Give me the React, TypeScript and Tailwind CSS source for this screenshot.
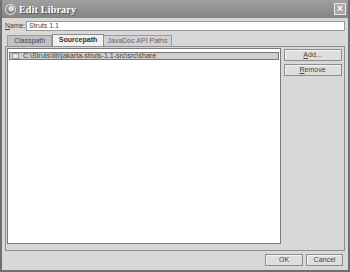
import React from "react";

const font = { fontFamily: '"Liberation Sans", Arial, sans-serif' };

const Button = ({ children, className = "" }: { children: React.ReactNode; className?: string }) => (
  <button
    className={`flex items-center justify-center border border-[#8c8c8c] bg-[#dedede] text-[7px] text-[#444] shadow-[inset_1px_1px_0_#f4f4f4] ${className}`}
  >
    {children}
  </button>
);

export default function App() {
  return (
    <div className="w-[350px] h-[272px] bg-[#6f6f6f] p-[2px] pt-0" style={font}>
      <div className="flex h-full flex-col bg-[#d8d8d8]">
        {/* title bar */}
        <div className="flex h-[18px] items-center bg-gradient-to-b from-[#a0a0a0] to-[#848484] pl-[3px] pr-[2px]">
          <div className="flex h-[11px] w-[11px] items-center justify-center rounded-full border border-[#eee] bg-[#8a8a8a] text-[7px] font-bold text-white">
            ⚙
          </div>
          <span className="ml-[3px] text-[10px] font-bold tracking-[0.2px] text-white [text-shadow:1px_1px_0_#555]" style={{ fontFamily: '"Liberation Serif", serif' }}>
            Edit Library
          </span>
          <div className="ml-auto flex h-[12px] w-[12px] items-center justify-center border border-[#e8e8e8] bg-[#a9a9a9] text-[10px] font-bold leading-none text-white">
            ×
          </div>
        </div>

        <div className="flex flex-1 flex-col px-[3px]">
          {/* name row */}
          <div className="mt-[3px] flex h-[10px] items-center">
            <span className="w-[21px] text-[7px] text-[#444]">
              <span className="underline">N</span>ame:
            </span>
            <div className="flex h-[10px] flex-1 items-center border border-[#9a9a9a] bg-white pl-[2px] text-[7px] text-[#444]">
              Struts 1.1
            </div>
          </div>

          {/* tabs */}
          <div className="mt-[3px] flex h-[12px] items-end pl-[2px]">
            <div className="flex h-[11px] w-[45px] items-center justify-center border border-b-0 border-[#9c9c9c] bg-[#c2c2c2] text-[7px] text-[#444]">
              Classpath
            </div>
            <div className="flex h-[12px] w-[52px] items-center justify-center border border-b-0 border-[#8e8e8e] bg-[#f0f0f0] text-[7px] font-bold text-[#333]">
              Sourcepath
            </div>
            <div className="flex h-[11px] w-[68px] items-center justify-center border border-b-0 border-l-0 border-[#9c9c9c] bg-[#d2d2d2] text-[7px] text-[#666]">
              JavaDoc API Paths
            </div>
          </div>

          {/* tab panel */}
          <div className="flex h-[205px] border border-[#8e8e8e] bg-[#d8d8d8] pb-[6px] pl-[1px] pt-[1px]">
            <div className="flex-1 border border-[#7a7a7a] bg-white p-[1px]">
              <div className="mt-[2px] flex h-[8px] items-center border border-[#777] bg-[#cfcfcf] pl-[2px] text-[7px] text-[#444]">
                <span className="mr-[4px] inline-block h-[6px] w-[7px] border border-[#999] bg-[#e6e6e6]" />
                C:\Struts\lib\jakarta-struts-1.1-src\src\share
              </div>
            </div>
            <div className="flex w-[63px] flex-col items-center gap-[3px] pt-[1px]">
              <Button className="h-[12px] w-[58px]">
                <span className="underline">A</span>dd...
              </Button>
              <Button className="h-[12px] w-[58px]">
                <span className="underline">R</span>emove
              </Button>
            </div>
          </div>

          {/* footer */}
          <div className="mt-[3px] flex justify-end gap-[3px] pr-[2px]">
            <Button className="h-[12px] w-[38px]">OK</Button>
            <Button className="h-[12px] w-[37px]">Cancel</Button>
          </div>
        </div>
      </div>
    </div>
  );
}
